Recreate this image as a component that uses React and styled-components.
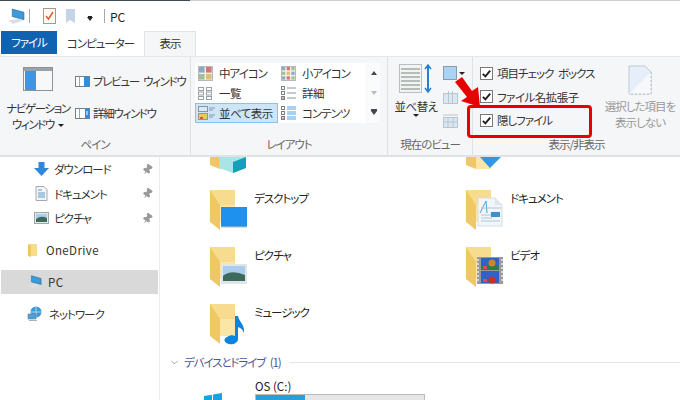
import styled, { createGlobalStyle } from "styled-components";
import { ChevronDown, Pin } from "lucide-react";

const GlobalStyle = createGlobalStyle`
  html, body { margin: 0; padding: 0; background: #fff; }
  body {
    font-family: "Noto Sans CJK JP", "Noto Sans", sans-serif;
    font-feature-settings: "palt";
    font-size: 11.5px;
    letter-spacing: -1px;
    word-spacing: 3px;
    color: #333;
  }
`;

function FolderBase() {
  return (
    <>
      <path d="M1 2 L26 2 L26 34 L1 34 Z" fill="#f7dc8f" />
      <path d="M1 2 L1 34 L11 42 L11 17 Z" fill="#efc865" />
      <path d="M11 17 L26 17 L26 34 L11 34 Z" fill="#fbe6a6" />
    </>
  );
}

function TileIcon({ kind }) {
  return (
    <svg width="38" height="43" viewBox="0 0 38 43">
      <FolderBase />
      {kind === "desktop" && (
        <>
          <rect x="12" y="19" width="26" height="20" fill="#1e90ee" />
          <path d="M12 39 L38 39" stroke="#b6c4d0" />
        </>
      )}
      {kind === "picture" && (
        <>
          <rect x="12" y="19" width="26" height="20" fill="#dfe6ea" />
          <rect x="14" y="21" width="22" height="15" fill="#a9cdea" />
          <path d="M14 31 Q22 24 36 30 L36 36 L14 36 Z" fill="#3f6a5a" />
        </>
      )}
      {kind === "music" && (
        <path
          d="M26 14 L29 14 C30 20 36 22 35 31 C34 28 32 26 29 25 L29 37 C29 41 24 43 20 42 C15 41 14 37 18 35 C21 33 24 33 26 34 Z"
          fill="#0a84dc"
        />
      )}
      {kind === "document" && (
        <>
          <path d="M13 10 L30 10 L37 17 L37 38 L13 38 Z" fill="#f3f6f9" stroke="#d7dde2" />
          <path d="M30 10 L30 17 L37 17" fill="#dfe5ea" />
          <path d="M21 13 L15 25 M21 13 L22 25" stroke="#4aa3df" fill="none" />
          <path d="M16 20 H36 M16 27 H27 M16 30 H27 M16 33 H35" stroke="#a9c6dc" />
          <rect x="26" y="24" width="9" height="5" fill="#3f8fc8" />
        </>
      )}
      {kind === "video" && (
        <>
          <rect x="12" y="12" width="26" height="27" fill="#9a9a9a" />
          <path d="M13 14 v24 M37 14 v24" stroke="#e8e8e8" strokeWidth="1.5" strokeDasharray="2 2" />
          <rect x="16" y="13" width="18" height="12" fill="#2e62c4" />
          <rect x="16" y="26" width="18" height="12" fill="#2e62c4" />
          <rect x="16" y="21" width="18" height="4" fill="#2d7f3d" />
          <circle cx="27" cy="18" r="3.5" fill="#c9872b" />
          <circle cx="27" cy="35" r="3.5" fill="#c9302b" />
          <path d="M18 21 h4 v3 h-4 Z M18 34 h4 v3 h-4 Z" fill="#d94a5a" />
        </>
      )}
    </svg>
  );
}

function PartialIcon({ kind }) {
  return (
    <svg width="38" height="16" viewBox="0 0 38 16">
      <path d="M1 0 L11 0 L11 12 L1 8 Z" fill="#efc865" />
      <path d="M11 0 L26 0 L26 12 L11 12 Z" fill="#fbe6a6" />
      {kind === "cube" ? (
        <>
          <path d="M10 0 L37 0 L37 11 L24 16 L10 11 Z" fill="#a9e4e6" />
          <path d="M24 5 L37 0 L37 11 L24 16 Z" fill="#14a0b8" />
        </>
      ) : (
        <path d="M15 0 L36 0 L25 11 Z" fill="#2f96e8" />
      )}
    </svg>
  );
}

function PcIcon({ size = 17 }) {
  return (
    <svg width={size} height={size} viewBox="0 0 17 17">
      <path d="M5 2 L16 5 L16 12 L5 9 Z" fill="#3b9ad9" stroke="#26689a" strokeWidth=".6" />
      <path d="M1 13 L10 11 L15 13 L6 16 Z" fill="#dcdfe2" />
    </svg>
  );
}

function PaneIcon({ side }) {
  return (
    <svg width="15" height="11" viewBox="0 0 15 11">
      <rect x=".5" y=".5" width="14" height="10" fill="#fff" stroke="#6f7f8c" />
      <rect x={side === "full" ? 9 : 10} y="1" width={side === "full" ? 5 : 4} height="9" fill="#2e8fe0" />
      <path d="M4.5 1 V10" stroke="#9aa7b2" />
      {side === "detail" && <path d="M11 4 h2 M11 6 h2" stroke="#fff" />}
    </svg>
  );
}

function GalleryIcon({ kind }) {
  const colors = ["#8fa9bd", "#d9736f", "#a5c08f", "#dcc078"];
  if (kind === "medium" || kind === "small") {
    const n = kind === "medium" ? 2 : 3;
    const cells = [];
    for (let y = 0; y < n; y++) {
      for (let x = 0; x < n; x++) {
        const s = 14 / n;
        cells.push(
          <rect key={`${x}${y}`} x={1 + x * s} y={1 + y * s} width={s - 1.4} height={s - 1.4} fill={colors[(x + y * 2) % 4]} />
        );
      }
    }
    return (
      <svg width="15" height="15" viewBox="0 0 15 15">
        <rect x=".5" y=".5" width="14" height="14" fill="#f0f1f2" stroke="#b4b9be" />
        {cells}
      </svg>
    );
  }
  if (kind === "list") {
    return (
      <svg width="15" height="13" viewBox="0 0 15 13">
        {[0, 8].map((x) =>
          [0, 4.5, 9].map((y) => (
            <rect key={`${x}${y}`} x={x + 0.5} y={y + 0.5} width="5" height="3" fill="#fff" stroke="#9aa2a8" />
          ))
        )}
      </svg>
    );
  }
  if (kind === "tile") {
    return (
      <svg width="18" height="14" viewBox="0 0 18 14">
        <rect x=".5" y=".5" width="9" height="5" fill="#dfe8ee" stroke="#7f97a8" />
        <rect x=".5" y="7.5" width="9" height="6" fill="#e7c95e" stroke="#9a9a7a" />
        <path d="M2 11 h3 v2 h-3 Z" fill="#d9534f" />
        <path d="M11 2 h6 M11 4 h4 M11 9 h6 M11 11 h4" stroke="#8a98a4" />
      </svg>
    );
  }
  return (
    <svg width="15" height="14" viewBox="0 0 15 14">
      {[0, 5, 10].map((y) => (
        <rect key={y} x=".5" y={y + 0.5} width="3" height="3" fill="#fff" stroke="#7a8288" />
      ))}
      <rect x="1.4" y="11.4" width="1.4" height="1.4" fill="#d9534f" />
      {kind === "content"
        ? [1, 3, 6, 8, 11, 13].map((y) => <path key={y} d={`M6 ${y} h9`} stroke="#5aa0dc" />)
        : [2, 7, 12].map((y) => <path key={y} d={`M6 ${y} h9`} stroke="#8a949c" />)}
    </svg>
  );
}

function Check() {
  return (
    <CheckBox>
      <svg width="11" height="11" viewBox="0 0 11 11">
        <path d="M1.8 5.8 L4.4 8.4 L9.2 2.6" stroke="#222" strokeWidth="1.9" fill="none" />
      </svg>
    </CheckBox>
  );
}

export default function App() {
  return (
    <Page>
      <GlobalStyle />
      <TopEdge />
      <TitleBar>
        <PcIcon size={18} />
        <TitleSep />
        <svg width="13" height="16" viewBox="0 0 13 16">
          <rect x=".5" y=".5" width="12" height="15" fill="#fdfaf4" stroke="#a89a88" />
          <path d="M3 8 L5.5 11 L10 4" stroke="#e0532b" strokeWidth="1.4" fill="none" />
        </svg>
        <svg width="11" height="15" viewBox="0 0 11 15">
          <path d="M1 0 H10 V14 L5 11 L1 14 Z" fill="#c6d5e6" />
        </svg>
        <DropArrow />
        <TitleSep />
        <TitleText>PC</TitleText>
      </TitleBar>
      <TabBar>
        <FileTab>ファイル</FileTab>
        <Tab $w={87}>コンピューター</Tab>
        <Tab $w={52} $active>表示</Tab>
      </TabBar>
      <Ribbon>
        <Group $w={191}>
          <GroupBody>
            <NavButton>
              <svg width="30" height="24" viewBox="0 0 30 24">
                <rect x=".5" y=".5" width="29" height="23" fill="#f7f8f9" stroke="#8b9298" />
                <rect x="1" y="1" width="28" height="3" fill="#9aa2a9" />
                <rect x="2" y="4" width="11" height="19" fill="#3f95e0" />
              </svg>
              <NavLabel>
                ナビゲーション
                <br />
                ウィンドウ <Caret />
              </NavLabel>
            </NavButton>
            <PaneColumn>
              <PaneRow>
                <PaneIcon side="full" />
                プレビュー ウィンドウ
              </PaneRow>
              <PaneRow>
                <PaneIcon side="detail" />
                詳細ウィンドウ
              </PaneRow>
            </PaneColumn>
          </GroupBody>
          <GroupLabel>ペイン</GroupLabel>
        </Group>
        <Group $w={197}>
          <GalleryWrap>
            <Gallery>
              <GalleryItem><GalleryIcon kind="medium" />中アイコン</GalleryItem>
              <GalleryItem><GalleryIcon kind="small" />小アイコン</GalleryItem>
              <GalleryItem $kanji><GalleryIcon kind="list" />一覧</GalleryItem>
              <GalleryItem $kanji><GalleryIcon kind="detail" />詳細</GalleryItem>
              <GalleryItem $kanji $selected><GalleryIcon kind="tile" />並べて表示</GalleryItem>
              <GalleryItem><GalleryIcon kind="content" />コンテンツ</GalleryItem>
            </Gallery>
            <Scroller>
              <ScrollArrow />
              <ScrollArrow $down $faint />
              <ScrollArrow $down $bar />
            </Scroller>
          </GalleryWrap>
          <GroupLabel>レイアウト</GroupLabel>
        </Group>
        <Group $w={85}>
          <ViewBody>
            <SortButton>
              <svg width="34" height="30" viewBox="0 0 34 30">
                <rect x=".5" y=".5" width="22" height="28" fill="#f2f4f4" stroke="#b8bec2" />
                <path d="M2 5 H21 M2 9 H21 M2 13 H21 M2 17 H21 M2 21 H21 M2 25 H21" stroke="#b5bdb9" strokeWidth="2" />
                <path d="M29 2 V27" stroke="#2480d0" strokeWidth="2" />
                <path d="M26 5 L29 1 L32 5 M26 24 L29 28 L32 24" stroke="#2480d0" strokeWidth="1.5" fill="none" />
              </svg>
              <SortLabel>並べ替え</SortLabel>
              <Caret />
            </SortButton>
            <ViewIcons>
              <ViewIconRow>
                <svg width="14" height="14" viewBox="0 0 14 14">
                  <rect x=".5" y=".5" width="13" height="13" fill="#a9d3f5" stroke="#8b9ba8" />
                </svg>
                <Caret />
              </ViewIconRow>
              <svg width="15" height="14" viewBox="0 0 15 14">
                <rect x=".5" y="3.5" width="14" height="10" fill="#dce6ee" stroke="#b8c6d2" />
                <path d="M5.5 1 V13 M9.5 1 V13" stroke="#b8c6d2" />
              </svg>
              <svg width="15" height="14" viewBox="0 0 15 14">
                <rect x=".5" y="3.5" width="14" height="10" fill="#dce6ee" stroke="#b8c6d2" />
                <path d="M0 1 H15 M5 4 V13 M10 4 V13 M1 8 H14" stroke="#b8c6d2" />
              </svg>
            </ViewIcons>
          </ViewBody>
          <GroupLabel>現在のビュー</GroupLabel>
        </Group>
        <Group $w={207} $last>
          <ToggleBody>
            <CheckColumn>
              <CheckRow><Check />項目チェック ボックス</CheckRow>
              <CheckRow $kanji><Check />ファイル名拡張子</CheckRow>
              <CheckRow><Check />隠しファイル</CheckRow>
            </CheckColumn>
            <HideButton>
              <svg width="24" height="30" viewBox="0 0 24 30">
                <path d="M1 1 H17 L23 7 V29 H1 Z" fill="#e6eff9" stroke="#bccbdb" />
                <path d="M1 29 L23 7 V29 Z" fill="#f7f8f9" />
                <path d="M23 7 V29 H1" stroke="#b8bcc0" strokeDasharray="2 2" fill="none" />
              </svg>
              <HideLabel>
                選択した項目を
                <br />
                表示しない
              </HideLabel>
            </HideButton>
          </ToggleBody>
          <GroupLabel>表示/非表示</GroupLabel>
        </Group>
      </Ribbon>
      <Body>
        <Sidebar>
          <QuickItem>
            <svg width="15" height="14" viewBox="0 0 15 14">
              <path d="M4.5 0 H10.5 V6 H15 L7.5 14 L0 6 H4.5 Z" fill="#2f86dc" />
            </svg>
            <QuickText>ダウンロード</QuickText>
            <PinIcon size={11} />
          </QuickItem>
          <QuickItem>
            <svg width="15" height="15" viewBox="0 0 15 15">
              <path d="M2 .5 H10 L13 3.5 V14.5 H2 Z" fill="#f2f4f6" stroke="#a4abb1" />
              <path d="M4 4 H8 M4 7 H11 M4 9 H11 M4 11 H11" stroke="#5d9ccc" />
            </svg>
            <QuickText>ドキュメント</QuickText>
            <PinIcon size={11} />
          </QuickItem>
          <QuickItem>
            <svg width="15" height="12" viewBox="0 0 15 12">
              <rect x=".5" y=".5" width="14" height="11" fill="#e4e8ea" stroke="#a0a6ab" />
              <rect x="2" y="2" width="11" height="8" fill="#a9cdea" />
              <path d="M2 7 Q7 3 13 6 V10 H2 Z" fill="#3f6a5a" />
            </svg>
            <QuickText>ピクチャ</QuickText>
            <PinIcon size={11} />
          </QuickItem>
          <RootItem $top={7} $latin>
            <svg width="13" height="14" viewBox="0 0 13 14">
              <path d="M1 1 H10 V13 H1 Z" fill="#f7dc8f" />
              <path d="M1 1 L1 13 L4 14 V3 Z" fill="#efc865" />
            </svg>
            OneDrive
          </RootItem>
          <RootItem $top={8} $latin $selected>
            <PcIcon size={15} />
            PC
          </RootItem>
          <RootItem $top={8}>
            <svg width="16" height="16" viewBox="0 0 16 16">
              <circle cx="9" cy="6" r="5.5" fill="#3d9ad6" />
              <path d="M4 6 H14 M9 1 V11" stroke="#bfe3f7" strokeWidth=".8" />
              <rect x="1" y="8" width="8" height="5" fill="#4f9fd8" stroke="#6d8392" strokeWidth=".6" />
              <path d="M2 14.5 H10" stroke="#aab2b8" />
            </svg>
            ネットワーク
          </RootItem>
        </Sidebar>
        <Main>
          <ClipRow>
            <PartialIcon kind="cube" />
            <PartialIcon kind="arrow" />
          </ClipRow>
          <TileGrid>
            <Tile><TileIcon kind="desktop" /><TileName>デスクトップ</TileName></Tile>
            <Tile><TileIcon kind="document" /><TileName>ドキュメント</TileName></Tile>
            <Tile><TileIcon kind="picture" /><TileName>ピクチャ</TileName></Tile>
            <Tile><TileIcon kind="video" /><TileName>ビデオ</TileName></Tile>
            <Tile><TileIcon kind="music" /><TileName>ミュージック</TileName></Tile>
          </TileGrid>
          <SectionHead>
            <ChevronDown size={11} color="#777" strokeWidth={1.5} />
            <SectionTitle>デバイスとドライブ (1)</SectionTitle>
            <SectionLine />
          </SectionHead>
          <DriveRow>
            <svg width="18" height="9" viewBox="0 0 18 9">
              <path d="M0 3 L8 1.8 V9 H0 Z M9 1.6 L18 0 V9 H9 Z" fill="#12a5e6" />
            </svg>
            <DriveInfo>
              <DriveName>OS (C:)</DriveName>
              <DriveBar>
                <DriveFill style={{ width: "29%" }} />
              </DriveBar>
            </DriveInfo>
          </DriveRow>
        </Main>
      </Body>
      <Highlight />
      <ArrowMark width="26" height="32" viewBox="0 0 26 32">
        <path d="M0 5 L7 0 L17 14 L23 10 L25 30 L6 24 L12 20 Z" fill="#e60000" />
      </ArrowMark>
    </Page>
  );
}

const Page = styled.div`
  position: relative;
  width: 680px;
  height: 400px;
  overflow: hidden;
  background: #fff;
`;

const TopEdge = styled.div`
  height: 1px;
  background: linear-gradient(to right, #3c4a58 0, #3c4a58 190px, #cfcfcf 190px);
`;

const TitleBar = styled.div`
  display: flex;
  align-items: center;
  gap: 4px;
  height: 30px;
  padding-left: 7px;
  box-sizing: border-box;

  & > svg:nth-child(3) {
    margin-left: 9px;
  }
  & > svg:nth-child(4) {
    margin-left: 5px;
  }
`;

const TitleSep = styled.div`
  width: 1px;
  height: 14px;
  background: #a8a8a8;
`;

const DropArrow = styled.div`
  width: 0;
  height: 0;
  margin: 5px 7px 0 7px;
  border-left: 3px solid transparent;
  border-right: 3px solid transparent;
  border-top: 4px solid #222;
  box-shadow: 0 -2px 0 -1px #222;
`;

const TitleText = styled.span`
  font-size: 12px;
  letter-spacing: 0;
  color: #222;
  margin-left: 1px;
`;

const TabBar = styled.div`
  display: flex;
  height: 25px;
  padding-left: 1px;
`;

const FileTab = styled.div`
  width: 56px;
  height: 23px;
  background: #0f63b0;
  color: #fff;
  text-align: center;
  line-height: 23px;
`;

const Tab = styled.div`
  width: ${(p) => p.$w}px;
  height: 25px;
  line-height: 23px;
  text-align: center;
  background: ${(p) => (p.$active ? "#f5f6f7" : "transparent")};
  border: 1px solid ${(p) => (p.$active ? "#e3e4e5" : "transparent")};
  border-bottom: 0;
  box-sizing: border-box;
`;

const Ribbon = styled.div`
  display: flex;
  height: 101px;
  background: #f5f6f7;
  border-top: 1px solid #e6e7e8;
  border-bottom: 2px solid #e1e2e3;
  box-sizing: border-box;
`;

const Group = styled.div`
  width: ${(p) => p.$w}px;
  flex: none;
  display: flex;
  flex-direction: column;
  box-sizing: border-box;
  border-right: ${(p) => (p.$last ? "0" : "1px solid #e0e1e2")};
`;

const GroupLabel = styled.div`
  height: 21px;
  text-align: center;
  line-height: 20px;
  color: #666;
`;

const GroupBody = styled.div`
  flex: 1;
  display: flex;
  padding: 9px 0 0 7px;
  gap: 6px;
`;

const NavButton = styled.div`
  display: flex;
  flex-direction: column;
  align-items: center;
  gap: 9px;
  width: 62px;
  padding-top: 1px;
`;

const NavLabel = styled.div`
  text-align: center;
  line-height: 16px;
  white-space: nowrap;
  letter-spacing: -1.4px;
`;

const Caret = styled.span`
  display: inline-block;
  width: 0;
  height: 0;
  vertical-align: middle;
  border-left: 3px solid transparent;
  border-right: 3px solid transparent;
  border-top: 3px solid #222;
`;

const PaneColumn = styled.div`
  display: flex;
  flex-direction: column;
  gap: 14px;
  padding-top: 6px;
`;

const PaneRow = styled.div`
  display: flex;
  align-items: center;
  gap: 3px;
  height: 18px;
  white-space: nowrap;
  letter-spacing: -1.3px;
`;

const GalleryWrap = styled.div`
  flex: 1;
  display: flex;
  padding: 6px 0 0 4px;
`;

const Gallery = styled.div`
  display: grid;
  grid-template-columns: 83px 88px;
  grid-auto-rows: 20px;
  align-content: start;
  height: 60px;
  background: #fff;
`;

const GalleryItem = styled.div`
  display: flex;
  align-items: center;
  gap: ${(p) => (p.$selected ? "3px" : "6px")};
  padding-left: 2px;
  white-space: nowrap;
  box-sizing: border-box;
  letter-spacing: ${(p) => (p.$kanji ? "-0.5px" : "-1px")};
  background: ${(p) => (p.$selected ? "#cde5f8" : "transparent")};
  border: 1px solid ${(p) => (p.$selected ? "#8dc0ea" : "transparent")};
`;

const Scroller = styled.div`
  width: 13px;
  height: 60px;
  margin-left: 1px;
  background: #fafbfb;
  display: flex;
  flex-direction: column;
  justify-content: space-around;
  align-items: center;
`;

const ScrollArrow = styled.div`
  width: 0;
  height: 0;
  border-left: 3px solid transparent;
  border-right: 3px solid transparent;
  border-bottom: ${(p) => (p.$down ? "0" : "4px solid #445")};
  border-top: ${(p) => (p.$down ? `4px solid ${p.$faint ? "#bbb" : "#445"}` : "0")};
  box-shadow: ${(p) => (p.$bar ? "0 -2px 0 0 #445" : "none")};
`;

const ViewBody = styled.div`
  flex: 1;
  display: flex;
  padding: 7px 0 0 6px;
  gap: 5px;
`;

const SortButton = styled.div`
  display: flex;
  flex-direction: column;
  align-items: center;
  width: 44px;
`;

const SortLabel = styled.div`
  white-space: nowrap;
  margin-top: 5px;
  line-height: 15px;
  letter-spacing: -0.5px;
`;

const ViewIcons = styled.div`
  display: flex;
  flex-direction: column;
  gap: 10px;
  padding-top: 2px;
`;

const ViewIconRow = styled.div`
  display: flex;
  align-items: center;
  gap: 2px;
`;

const ToggleBody = styled.div`
  flex: 1;
  display: flex;
  padding-top: 5px;
`;

const CheckColumn = styled.div`
  width: 123px;
  padding-left: 7px;
  display: flex;
  flex-direction: column;
  gap: 1px;
`;

const CheckRow = styled.div`
  display: flex;
  align-items: center;
  gap: 4px;
  height: 22.5px;
  white-space: nowrap;
  letter-spacing: ${(p) => (p.$kanji ? "-0.5px" : "-1px")};
`;

const CheckBox = styled.div`
  width: 11px;
  height: 11px;
  display: flex;
  background: #fff;
  border: 1px solid #7a7a7a;
`;

const HideButton = styled.div`
  display: flex;
  flex-direction: column;
  align-items: center;
  width: 74px;
  margin-top: 3px;
  gap: 3px;
`;

const HideLabel = styled.div`
  text-align: center;
  line-height: 16px;
  color: #999;
  white-space: nowrap;
`;

const Body = styled.div`
  display: flex;
  height: 243px;
`;

const Sidebar = styled.div`
  width: 160px;
  flex: none;
  box-sizing: border-box;
  border-right: 1px solid #ececec;
  padding: 0 1px 0 1px;
`;

const QuickItem = styled.div`
  display: flex;
  align-items: center;
  height: 24.5px;
  padding-left: 33px;
`;

const QuickText = styled.span`
  flex: 1;
  margin-left: 5px;
`;

const PinIcon = styled(Pin)`
  color: #999;
  fill: #999;
  margin-right: 5px;
  transform: rotate(35deg);
`;

const RootItem = styled.div`
  display: flex;
  align-items: center;
  gap: 6px;
  height: 24px;
  margin-top: ${(p) => p.$top}px;
  padding-left: 26px;
  letter-spacing: ${(p) => (p.$latin ? "0.4px" : "-1px")};
  background: ${(p) => (p.$selected ? "#d9d9d9" : "transparent")};
`;

const Main = styled.div`
  flex: 1;
  min-width: 0;
`;

const ClipRow = styled.div`
  display: grid;
  grid-template-columns: 256px 1fr;
  padding-left: 49px;
  height: 16px;
`;

const TileGrid = styled.div`
  display: grid;
  grid-template-columns: 256px 1fr;
  grid-template-rows: 57px 57px 52px;
  padding: 15px 0 0 49px;
`;

const Tile = styled.div`
  display: flex;
  gap: 7px;
`;

const TileName = styled.span`
  color: #222;
  line-height: 16px;
  margin-top: 2px;
`;

const SectionHead = styled.div`
  display: flex;
  align-items: center;
  gap: 4px;
  height: 16px;
  padding-left: 9px;
`;

const SectionTitle = styled.span`
  color: #4a5a9a;
  letter-spacing: -1.1px;
`;

const SectionLine = styled.div`
  flex: 1;
  height: 1px;
  margin-left: 4px;
  background: #e6e6e6;
`;

const DriveRow = styled.div`
  display: flex;
  align-items: flex-end;
  gap: 33px;
  padding: 9px 0 0 44px;
`;

const DriveInfo = styled.div`
  width: 170px;
  margin-bottom: -4px;
`;

const DriveName = styled.div`
  color: #222;
  line-height: 14px;
  letter-spacing: 0;
  word-spacing: 0;
`;

const DriveBar = styled.div`
  height: 12px;
  margin-top: 1px;
  background: #e6e6e6;
  border: 1px solid #bcbcbc;
  box-sizing: border-box;
`;

const DriveFill = styled.div`
  height: 100%;
  background: #26a0da;
`;

const Highlight = styled.div`
  position: absolute;
  left: 467px;
  top: 105px;
  width: 125px;
  height: 33px;
  box-sizing: border-box;
  border: 3px solid #e60000;
  border-radius: 4px;
`;

const ArrowMark = styled.svg`
  position: absolute;
  left: 455px;
  top: 77px;
`;
